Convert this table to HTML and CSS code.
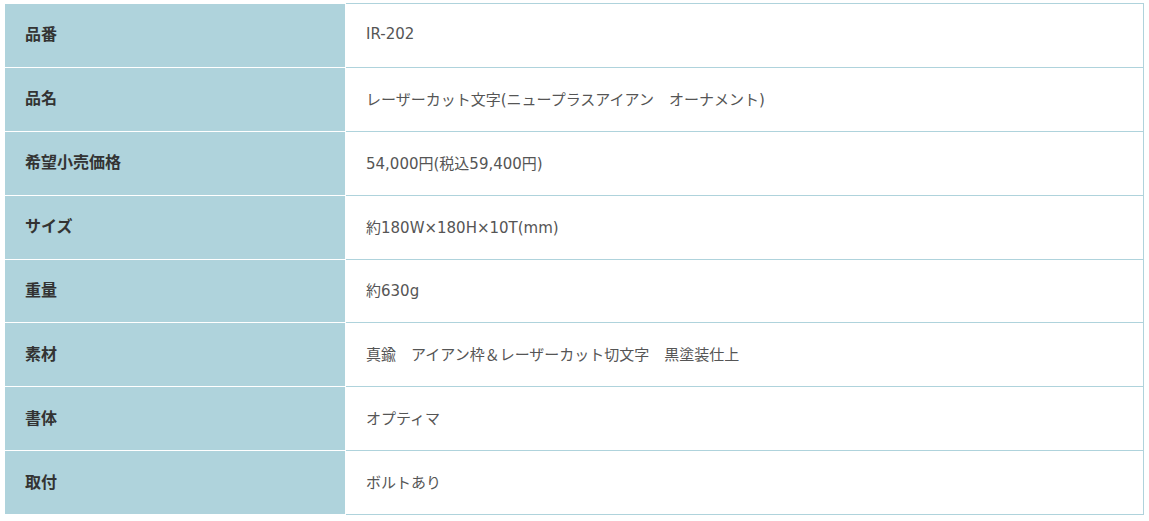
FILE: index.html
```html
<!DOCTYPE html>
<html lang="ja">
<head>
<meta charset="utf-8">
<title>商品仕様</title>
<link rel="stylesheet" href="styles.css">
</head>
<body>
<table class="spec">
  <tbody>
    <tr><th>品番</th><td>IR-202</td></tr>
    <tr><th>品名</th><td>レーザーカット文字(ニュープラスアイアン　オーナメント)</td></tr>
    <tr><th>希望小売価格</th><td>54,000円(税込59,400円)</td></tr>
    <tr><th>サイズ</th><td>約180W×180H×10T(mm)</td></tr>
    <tr><th>重量</th><td>約630g</td></tr>
    <tr><th>素材</th><td>真鍮　アイアン枠＆レーザーカット切文字　黒塗装仕上</td></tr>
    <tr><th>書体</th><td>オプティマ</td></tr>
    <tr><th>取付</th><td>ボルトあり</td></tr>
  </tbody>
</table>
</body>
</html>
```

FILE: styles.css
```css
html, body {
  margin: 0;
  padding: 0;
  background: #fff;
}
body {
  padding: 3px 0 0 4px;
  font-family: "DejaVu Sans", "Noto Sans CJK JP", sans-serif;
  font-size: 15px;
}
.spec {
  border-collapse: collapse;
  width: 1140px;
  table-layout: fixed;
}
.spec tr {
  height: 63.875px;
}
.spec th {
  width: 300px;
  background: #afd3dc;
  border: 1px solid #fff;
  color: #333;
  font-family: "Noto Sans CJK JP", sans-serif;
  font-size: 16px;
  font-weight: bold;
  text-align: left;
  padding: 0 20px 4px;
  vertical-align: middle;
}
.spec td {
  border: 1px solid #afd3dc;
  color: #555;
  padding: 0 20px 2px;
  vertical-align: middle;
}
```
